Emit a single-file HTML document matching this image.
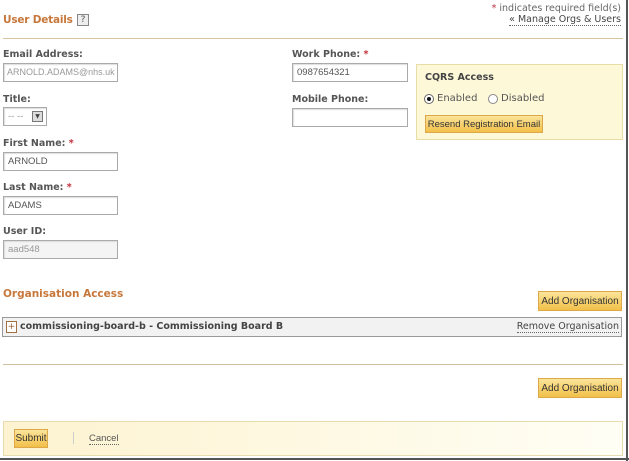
<!DOCTYPE html>
<html><head><style>
*{margin:0;padding:0;box-sizing:border-box}
body{width:629px;height:461px;background:#fff;position:relative;overflow:hidden;font-family:"DejaVu Sans",Verdana,sans-serif;font-size:10px;color:#444}
.a{position:absolute;white-space:nowrap}
.lbl{font-weight:bold;color:#555;font-size:9.5px}
.req{color:#c0303a}
.inp{position:absolute;border:1px solid #aaa;background:#fff;font-family:"Liberation Sans",Arial,sans-serif;font-size:9.5px;color:#555;padding:3px 4px;line-height:11px;box-shadow:inset 1px 1px 1px #ddd;overflow:hidden}
.h{color:#c8773a;font-weight:bold;font-size:10.5px}
.btn{position:absolute;white-space:nowrap;background:linear-gradient(#fbe49a,#f2c04a);border:1px solid #dca84a;font-family:"Liberation Sans",Arial,sans-serif;font-size:10px;color:#333;text-align:center;line-height:17px}
.line{position:absolute;height:1px;background:#d8c4a0}
.u{border-bottom:1px dotted #666}
</style></head><body>
<div style="position:absolute;right:1px;top:0;width:2px;height:461px;background:#555"></div>
<div style="position:absolute;left:0;bottom:1px;width:629px;height:2px;background:#555"></div>

<div class="a h" style="left:3px;top:14px;letter-spacing:-0.2px">User Details</div>
<div class="a" style="left:77px;top:14px;width:12px;height:12px;border:1px solid #888;background:#eee;font-size:9px;text-align:center;line-height:10px;color:#555">?</div>
<div class="a" style="right:8px;top:3px;color:#666;font-size:9.5px"><span class="req">*</span> indicates required field(s)</div>
<div class="a" style="right:8px;top:14px;color:#444;font-size:9.5px"><span class="u">« Manage Orgs &amp; Users</span></div>
<div class="line" style="left:3px;top:38px;width:620px"></div>

<div class="a lbl" style="left:3px;top:49px">Email Address:</div>
<div class="inp" style="left:3px;top:63px;width:115px;height:19px;color:#999;font-size:9px;padding:3px 3px">ARNOLD.ADAMS@nhs.uk</div>
<div class="a lbl" style="left:3px;top:94px">Title:</div>
<div class="inp" style="left:3px;top:107px;width:44px;height:19px;color:#999">-- --</div>
<div class="a" style="left:32px;top:111px;width:11px;height:11px;border:1px solid #777;background:#ddd;font-size:6px;text-align:center;line-height:10px">▼</div>
<div class="a lbl" style="left:3px;top:138px">First Name: <span class="req">*</span></div>
<div class="inp" style="left:3px;top:152px;width:115px;height:19px">ARNOLD</div>
<div class="a lbl" style="left:3px;top:182px">Last Name: <span class="req">*</span></div>
<div class="inp" style="left:3px;top:196px;width:115px;height:19px">ADAMS</div>
<div class="a lbl" style="left:3px;top:226px">User ID:</div>
<div class="inp" style="left:3px;top:240px;width:115px;height:19px;background:#f4f4f4;color:#999">aad548</div>

<div class="a lbl" style="left:292px;top:49px">Work Phone: <span class="req">*</span></div>
<div class="inp" style="left:292px;top:63px;width:116px;height:19px">0987654321</div>
<div class="a lbl" style="left:292px;top:94px">Mobile Phone:</div>
<div class="inp" style="left:292px;top:108px;width:116px;height:19px"></div>

<div class="a" style="left:416px;top:64px;width:207px;height:76px;background:#fdf8d8;border:1px solid #e8dca8"></div>
<div class="a lbl" style="left:425px;top:72px;color:#444">CQRS Access</div>
<div class="a" style="left:424px;top:94px;width:10px;height:10px;border:1px solid #666;border-radius:50%;background:#fff"></div>
<div class="a" style="left:427px;top:97px;width:4px;height:4px;border-radius:50%;background:#111"></div>
<div class="a" style="left:437px;top:93px;color:#555">Enabled</div>
<div class="a" style="left:488px;top:94px;width:10px;height:10px;border:1px solid #888;border-radius:50%;background:#fff"></div>
<div class="a" style="left:501px;top:93px;color:#555">Disabled</div>
<div class="btn" style="left:425px;top:115px;width:118px;height:18px;font-size:9.5px">Resend Registration Email</div>

<div class="a h" style="left:3px;top:288px">Organisation Access</div>
<div class="btn" style="left:538px;top:291px;width:84px;height:20px;line-height:19px">Add Organisation</div>
<div class="a" style="left:2px;top:317px;width:620px;height:20px;background:#f2f2f2;border:1px solid #999"></div>
<div class="a" style="left:6px;top:321px;width:11px;height:12px;border:1px solid #a07040;background:#fff;font-size:9px;line-height:10px;text-align:center;color:#a06030">+</div>
<div class="a" style="left:20px;top:321px;font-weight:bold;color:#444;font-size:9.5px">commissioning-board-b - Commissioning Board B</div>
<div class="a" style="right:10px;top:321px;color:#444;font-size:9.5px"><span class="u">Remove Organisation</span></div>

<div class="line" style="left:3px;top:364px;width:620px;background:#d0c0a0"></div>
<div class="btn" style="left:538px;top:378px;width:84px;height:20px;line-height:19px">Add Organisation</div>

<div class="a" style="left:3px;top:421px;width:620px;height:35px;background:linear-gradient(90deg,#fdf3d0,#fffef5);border:1px solid #e6dcb0"></div>
<div class="btn" style="left:14px;top:429px;width:34px;height:19px">Submit</div>
<div class="a" style="left:73px;top:432px;width:1px;height:12px;background:#ccc"></div>
<div class="a" style="left:89px;top:433px;font-family:'Liberation Sans',Arial,sans-serif;font-size:9.5px;color:#555"><span class="u">Cancel</span></div>
</body></html>
